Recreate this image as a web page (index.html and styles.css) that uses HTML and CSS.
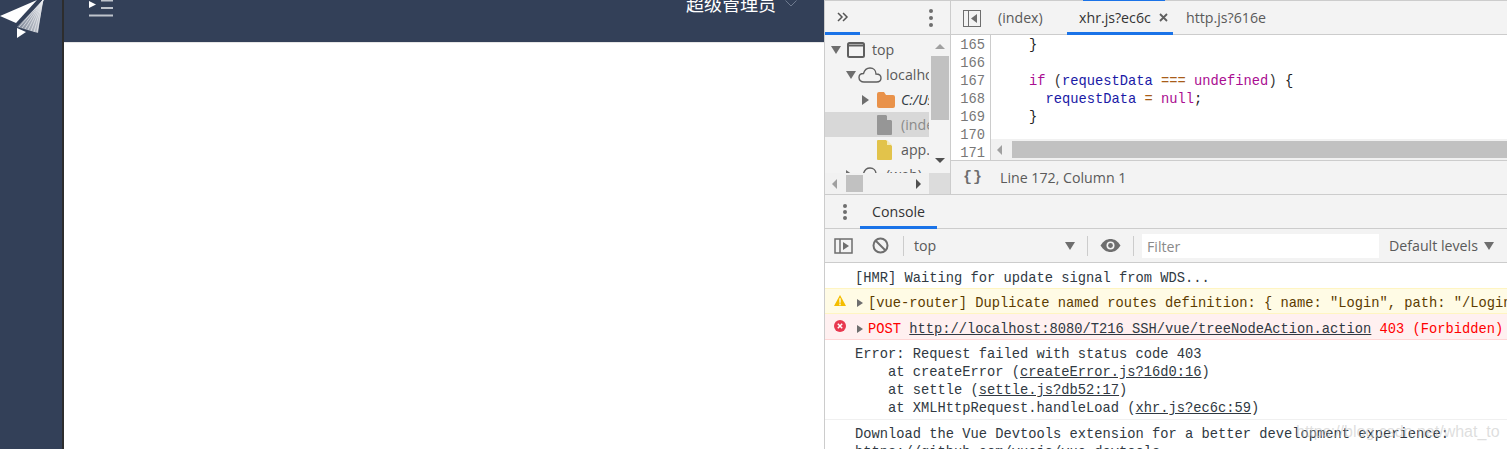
FILE: index.html
```html
<!DOCTYPE html>
<html lang="zh">
<head>
<meta charset="utf-8">
<title>DevTools</title>
<link rel="stylesheet" href="styles.css">
</head>
<body>
<div class="screen">
  <aside class="sidebar">
    <svg class="logo" width="48" height="42" viewBox="0 0 48 42">
      <defs>
        <linearGradient id="fold" x1="0" y1="0" x2="1" y2="0">
          <stop offset="0" stop-color="#7d8696"/>
          <stop offset="1" stop-color="#c9cdd4"/>
        </linearGradient>
      </defs>
      <polygon points="0,16 37,0 16,23" fill="#fff"/>
      <polygon points="17,27 43,0 38,33" fill="url(#fold)"/>
      <path d="M19 27 43 0M22 28 43 0M25 29 43 0M28 30 43 0M31 31 43 0M34 32 43 0M37 32 43 0" stroke="#eceef1" stroke-width=".7" fill="none"/>
      <polygon points="17,28 17,38 26,32" fill="#fff"/>
    </svg>
  </aside>
  <main class="page">
    <header class="topbar">
      <svg class="menu-icon" width="26" height="18" viewBox="0 0 26 18">
        <polygon points="1,1 8,4.5 1,8" fill="#fff"/>
        <path d="M13 .5H25M13 8H25M1 15.500H25" stroke="#bfc4cc" stroke-width="2"/>
      </svg>
      <div class="user">
        <span class="user-name">超级管理员</span>
        <svg width="12" height="7" viewBox="0 0 12 7"><path d="M.5.5 6 6 11.500.5" stroke="#6f7b8f" fill="none"/></svg>
      </div>
    </header>
  </main>
  <section class="devtools">
    <div class="sources">
      <div class="navigator">
        <div class="nav-tabs">
          <div class="nav-tab">
            <svg width="12" height="10" viewBox="0 0 12 10"><path d="M1 1 5 5 1 9M6 1 10 5 6 9" stroke="#555" stroke-width="1.500" fill="none"/></svg>
          </div>
          <span class="kebab"><i></i><i></i><i></i></span>
        </div>
        <div class="nav-body">
          <div class="tree-area">
            <div class="tree">
              <div class="tree-row lvl0"><i class="arrow-down"></i>
                <svg class="tree-ico" width="18" height="16" viewBox="0 0 18 16"><rect x="1" y="1" width="16" height="14" rx="1.500" fill="none" stroke="#5f5f5f" stroke-width="2"/><path d="M1 3.500H17" stroke="#5f5f5f" stroke-width="2"/></svg>
                <span>top</span></div>
              <div class="tree-row lvl1"><i class="arrow-down"></i>
                <svg class="tree-ico" width="24" height="16" viewBox="0 0 24 16"><path d="M6 15C3 15 1 13 1 10.500 1 8 3 6.500 5.500 6.500 6.500 3 9 1 12 1 15.500 1 18 3.500 18 7 21 7 23 8.500 23 11 23 13.500 21 15 18.500 15Z" fill="none" stroke="#5f5f5f" stroke-width="1.400"/></svg>
                <span>localhost:8080</span></div>
              <div class="tree-row lvl2"><i class="arrow-right"></i>
                <svg class="tree-ico" width="18" height="16" viewBox="0 0 18 16"><path d="M0 2Q0 0 2 0H7L9 3H16Q18 3 18 5V14Q18 16 16 16H2Q0 16 0 14Z" fill="#e9924a"/></svg>
                <span class="folder-name">C:/Users</span></div>
              <div class="tree-row lvl3 selected">
                <svg class="tree-ico" width="15" height="20" viewBox="0 0 15 20"><path d="M1 0H9L15 6V19Q15 20 14 20H1Q0 20 0 19V1Q0 0 1 0Z" fill="#969696"/><path d="M10 0 15 5H10Z" fill="#d8d8d8"/></svg>
                <span class="muted">(index)</span></div>
              <div class="tree-row lvl3">
                <svg class="tree-ico" width="15" height="20" viewBox="0 0 15 20"><path d="M1 0H9L15 6V19Q15 20 14 20H1Q0 20 0 19V1Q0 0 1 0Z" fill="#e2c34b"/><path d="M10 0 15 5H10Z" fill="#f5eab8"/></svg>
                <span>app.js</span></div>
              <div class="tree-row lvl1"><i class="arrow-right"></i>
                <svg class="tree-ico" width="24" height="16" viewBox="0 0 24 16"><path d="M6 15C3 15 1 13 1 10.500 1 8 3 6.500 5.500 6.500 6.500 3 9 1 12 1 15.500 1 18 3.500 18 7 21 7 23 8.500 23 11 23 13.500 21 15 18.500 15Z" fill="none" stroke="#5f5f5f" stroke-width="1.400"/></svg>
                <span>(web)</span></div>
            </div>
            <div class="vscroll">
              <i class="sb-up"></i>
              <div class="vthumb"></div>
              <i class="sb-down"></i>
            </div>
          </div>
          <div class="hscroll-row">
            <div class="nav-hscroll">
              <i class="sb-left"></i>
              <div class="nav-hthumb"></div>
              <i class="sb-right"></i>
            </div>
            <div class="sb-corner"></div>
          </div>
        </div>
      </div>
      <div class="editor">
        <div class="editor-tabs">
          <svg class="panel-toggle" width="18" height="17" viewBox="0 0 18 17"><rect x=".5" y=".5" width="17" height="16" fill="none" stroke="#6e6e6e"/><path d="M5.500 1V16" stroke="#6e6e6e"/><polygon points="14,4 8,8.500 14,13" fill="#6e6e6e"/></svg>
          <div class="file-tab index-tab">(index)</div>
          <div class="file-tab active">xhr.js?ec6c<svg class="tab-close" width="9" height="9" viewBox="0 0 9 9"><path d="M1 1 8 8M8 1 1 8" stroke="#5f5f5f" stroke-width="1.800"/></svg></div>
          <div class="file-tab http-tab">http.js?616e</div>
        </div>
        <div class="code-area">
          <div class="gutter">
            <div>165</div><div>166</div><div>167</div><div>168</div><div>169</div><div>170</div><div>171</div>
          </div>
          <div class="code-col">
            <div class="code">
<div class="code-line">    <span class="br">}</span></div>
<div class="code-line"> </div>
<div class="code-line">    <span class="kw">if</span> (<span class="var">requestData</span> <span class="op">===</span> <span class="kw">undefined</span>) <span class="br">{</span></div>
<div class="code-line">      <span class="var">requestData</span> <span class="op">=</span> <span class="kw">null</span><span class="br">;</span></div>
<div class="code-line">    <span class="br">}</span></div>
            </div>
            <div class="code-hscroll">
              <i class="sb-left"></i>
              <div class="code-hthumb"></div>
            </div>
          </div>
        </div>
        <div class="status">
          <span class="braces">{}</span>
          <span>Line 172, Column 1</span>
        </div>
      </div>
    </div>
    <div class="console-tabs">
      <span class="kebab"><i></i><i></i><i></i></span>
      <div class="console-tab">Console</div>
    </div>
    <div class="console-toolbar">
      <svg class="tb-sidebar" width="19" height="16" viewBox="0 0 19 16"><rect x="1" y="1" width="17" height="14" fill="none" stroke="#6e6e6e" stroke-width="1.500"/><path d="M6 1V15" stroke="#6e6e6e" stroke-width="1.500"/><polygon points="9,4 15,8 9,12" fill="#6e6e6e"/></svg>
      <svg class="tb-clear" width="17" height="17" viewBox="0 0 17 17"><circle cx="8.500" cy="8.500" r="7" fill="none" stroke="#6e6e6e" stroke-width="2"/><path d="M3.500 3.500 13.500 13.500" stroke="#6e6e6e" stroke-width="2"/></svg>
      <i class="tb-sep"></i>
      <div class="context"><span>top</span><i class="select-arrow"></i></div>
      <i class="tb-sep"></i>
      <svg class="tb-eye" width="21" height="13" viewBox="0 0 20 13"><path d="M0 6.500C3 2 6 0 10 0S17 2 20 6.500C17 11 14 13 10 13S3 11 0 6.500Z" fill="#6e6e6e"/><circle cx="10" cy="6.500" r="4" fill="#f3f3f3"/><circle cx="10" cy="6.500" r="2.400" fill="#6e6e6e"/></svg>
      <i class="tb-sep"></i>
      <div class="filter">Filter</div>
      <div class="levels"><span>Default levels</span><i class="select-arrow"></i></div>
    </div>
    <div class="messages">
      <div class="msg plain"><span class="msg-text">[HMR] Waiting for update signal from WDS...</span></div>
      <div class="msg warn">
        <svg class="msg-ico" width="12" height="13" viewBox="0 0 14 13"><polygon points="7,0 14,13 0,13" fill="#f4bd00"/><path d="M7 4V9M7 10V12" stroke="#fff" stroke-width="1.500"/></svg>
        <i class="msg-arrow"></i><span class="msg-text">[vue-router] Duplicate named routes definition: { name: "Login", path: "/Login", component: Login }</span>
      </div>
      <div class="msg error">
        <svg class="msg-ico" width="12" height="12" viewBox="0 0 12 12"><circle cx="6" cy="6" r="6" fill="#e8384f"/><path d="M3.800 3.800 8.200 8.200M8.200 3.800 3.800 8.200" stroke="#fff" stroke-width="1.500"/></svg>
        <i class="msg-arrow"></i><span class="msg-text">POST <a class="link">http://localhost:8080/T216_SSH/vue/treeNodeAction.action</a> 403 (Forbidden)</span>
      </div>
      <div class="msg block">
        <div>Error: Request failed with status code 403</div>
        <div class="trace">at createError (<a class="link">createError.js?16d0:16</a>)</div>
        <div class="trace">at settle (<a class="link">settle.js?db52:17</a>)</div>
        <div class="trace">at XMLHttpRequest.handleLoad (<a class="link">xhr.js?ec6c:59</a>)</div>
      </div>
      <div class="msg block last">
        <div>Download the Vue Devtools extension for a better development experience:</div>
        <div>https://github.com/vuejs/vue-devtools</div>
      </div>
    </div>
    <div class="watermark">https://blog.csdn.net/what_to</div>
  </section>
</div>
</body>
</html>
```

FILE: styles.css
```css
* { box-sizing: border-box; }
html, body { margin: 0; height: 100%; overflow: hidden; background: #fff; }
i { display: block; font-style: normal; }

.screen {
  display: flex;
  width: 1507px;
  height: 449px;
  overflow: hidden;
  font-family: "Open Sans", "Noto Sans", "Noto Sans CJK SC", sans-serif;
  font-size: 14.200px;
  color: #5a5a5a;
}

/* App behind DevTools */
.sidebar {
  flex: 0 0 64px;
  background: #334058;
  border-right: 2px solid #2d2d2d;
  overflow: hidden;
}
.logo { display: block; }
.page { flex: 0 0 760px; background: #fff; }
.topbar {
  height: 43px;
  background: #334058;
  border-bottom: 1px solid #e6e6e6;
  display: flex;
  justify-content: space-between;
  align-items: flex-start;
  padding: 0 27px 0 24px;
}
.menu-icon { display: block; }
.user { display: flex; gap: 9px; margin-top: -10px; }
.user svg { margin-top: 10px; }
.user-name {
  color: #fff;
  font-size: 18px;
  line-height: 26px;
  font-family: "Noto Sans CJK SC", sans-serif;
}

/* DevTools */
.devtools {
  position: relative;
  flex: 1;
  display: flex;
  flex-direction: column;
  min-width: 0;
  background: #fff;
  border-left: 1px solid #ccc;
}
.sources {
  flex: 0 0 195px;
  height: 195px;
  min-height: 0;
  overflow: hidden;
  display: flex;
  border-bottom: 1px solid #ccc;
  background: #f3f3f3;
}

.navigator {
  flex: 0 0 126px;
  display: flex;
  flex-direction: column;
  min-height: 0;
  overflow: hidden;
  border-right: 1px solid #ccc;
  border-top: 1px solid #ccc;
}
.nav-tabs {
  flex: 0 0 34px;
  min-height: 0;
  display: flex;
  justify-content: space-between;
  align-items: center;
  border-bottom: 1px solid #ccc;
}
.nav-tab {
  align-self: flex-start;
  width: 35px;
  height: 34px;
  display: flex;
  align-items: center;
  justify-content: center;
  border-bottom: 3px solid #1a73e8;
}
.kebab { display: flex; flex-direction: column; gap: 3px; margin-right: 17px; }
.kebab i { width: 4px; height: 4px; border-radius: 50%; background: #6e6e6e; }
.nav-body { flex: 1; display: flex; flex-direction: column; min-height: 0; }
.tree-area { flex: 1; display: flex; min-height: 0; overflow: hidden; }
.tree { flex: 0 0 104px; padding-top: 2px; overflow: hidden; }
.tree-row {
  display: flex;
  align-items: center;
  height: 25px;
  white-space: nowrap;
  overflow: hidden;
}
.tree-ico { flex: none; }
.lvl0 { padding-left: 6px; }
.lvl0 .tree-ico { margin-left: 6px; }
.lvl0 span { margin-left: 7px; }
.lvl1 { padding-left: 21px; }
.lvl1 .tree-ico { margin-left: 2px; }
.lvl1 .arrow-right + .tree-ico { margin-left: 5px; }
.lvl1 span { margin-left: 4px; }
.lvl2 { padding-left: 37px; }
.lvl2 .tree-ico { margin-left: 8px; }
.lvl2 span { margin-left: 6px; }
.lvl3 { padding-left: 52px; }
.lvl3 span { margin-left: 9px; }
.selected { background: #d8d8d8; }
.muted { color: #8a8a8a; }
.folder-name { color: #303942; font-style: italic; }
.arrow-down { flex: none; width: 0; height: 0; border: 5px solid transparent; border-top: 8px solid #6e6e6e; border-bottom: 0; }
.arrow-right { flex: none; width: 0; height: 0; border: 5px solid transparent; border-left: 7px solid #6e6e6e; border-right: 0; }

.vscroll {
  flex: 0 0 18px;
  margin-left: 2px;
  display: flex;
  flex-direction: column;
  align-items: stretch;
  padding-top: 9px;
}
.sb-up { align-self: center; width: 0; height: 0; border: 5px solid transparent; border-bottom: 5px solid #a0a0a0; border-top: 0; }
.vthumb { height: 64px; margin-top: 7px; background: #c1c1c1; }
.sb-down { align-self: center; margin-top: 38px; width: 0; height: 0; border: 5px solid transparent; border-top: 5px solid #505050; border-bottom: 0; }

.hscroll-row { flex: 0 0 21px; display: flex; }
.nav-hscroll {
  flex: 1;
  display: flex;
  align-items: center;
  padding-left: 7px;
  background: #f1f1f1;
}
.sb-left { flex: none; width: 0; height: 0; border: 5px solid transparent; border-right: 5px solid #a0a0a0; border-left: 0; }
.sb-right { flex: none; width: 0; height: 0; border: 5px solid transparent; border-left: 5px solid #505050; border-right: 0; margin-left: 53px; }
.nav-hthumb { width: 17px; height: 17px; margin-left: 9px; background: #c1c1c1; }
.sb-corner { flex: 0 0 21px; background: #dcdcdc; }

.editor { flex: 1; display: flex; flex-direction: column; min-width: 0; min-height: 0; border-top: 1px solid #ccc; }
.editor-tabs {
  flex: 0 0 34px;
  min-height: 0;
  display: flex;
  align-items: flex-start;
  border-bottom: 1px solid #ccc;
  white-space: nowrap;
}
.panel-toggle { flex: none; margin: 9px 0 0 12px; }
.file-tab {
  flex: none;
  padding: 7px 12px 0;
  height: 33px;
  color: #5a5a5a;
}
.index-tab { margin-left: 5px; width: 81px; }
.file-tab.active {
  position: relative;
  width: 106px;
  height: 34px;
  border-bottom: 3px solid #1a73e8;
  color: #333;
  padding-right: 0;
  display: flex;
  align-items: flex-start;
  gap: 8px;
}
.file-tab.active::before {
  content: "";
  position: absolute;
  left: 16px;
  top: -1px;
  width: 82px;
  height: 1px;
  background: #1a73e8;
}
.http-tab { padding-left: 13px; }
.tab-close { flex: none; margin-top: 5px; }
.code-area { flex: 1; display: flex; min-height: 0; background: #fff; }
.gutter {
  flex: 0 0 40px;
  border-right: 1px solid #ccc;
  text-align: right;
  padding: 2px 5px 0 0;
  font: 13.750px/18px "Liberation Mono", monospace;
  color: #777;
  overflow: hidden;
  background: #fff;
}
.code-col { flex: 1; display: flex; flex-direction: column; min-width: 0; }
.code {
  flex: 1;
  min-height: 0;
  overflow: hidden;
  font: 13.750px/18px "Liberation Mono", monospace;
  color: #333;
  padding: 2px 0 0 5px;
}
.code-line { white-space: pre; height: 18px; }
.kw { color: #aa0d91; }
.var { color: #1a1aa6; }
.op { color: #a85c1a; }
.br { color: #222; }
.code-hscroll { flex: 0 0 21px; display: flex; align-items: center; padding-left: 6px; background: #f1f1f1; }
.code-hthumb { flex: 1; height: 17px; margin-left: 10px; background: #c1c1c1; }
.status {
  flex: 0 0 34px;
  display: flex;
  align-items: center;
  padding-left: 12px;
  border-top: 1px solid #ccc;
  color: #5a5a5a;
}
.braces { width: 18px; margin-right: 19px; font: bold 15px "Liberation Mono", monospace; color: #6e6e6e; letter-spacing: 1px; white-space: nowrap; }

.console-tabs {
  flex: 0 0 34px;
  min-height: 0;
  display: flex;
  align-items: center;
  background: #f3f3f3;
  border-bottom: 1px solid #ccc;
}
.console-tabs .kebab { margin: 0 0 0 18px; gap: 2px; }
.console-tab {
  align-self: flex-start;
  margin-left: 13px;
  width: 77px;
  height: 34px;
  padding-top: 7px;
  text-align: center;
  border-bottom: 3px solid #1a73e8;
  color: #333;
}
.console-toolbar {
  flex: 0 0 34px;
  display: flex;
  align-items: center;
  background: #f3f3f3;
  border-bottom: 1px solid #ccc;
  padding-left: 9px;
}
.tb-sep { flex: none; width: 1px; height: 20px; background: #ccc; }
.tb-clear { margin-left: 19px; }
.tb-clear + .tb-sep { margin-left: 14px; }
.context { flex: none; width: 183px; display: flex; justify-content: space-between; align-items: center; padding: 0 12px 0 10px; }
.select-arrow { flex: none; width: 0; height: 0; border: 5px solid transparent; border-top: 8px solid #6e6e6e; border-bottom: 0; }
.tb-eye { margin-left: 12px; }
.tb-eye + .tb-sep { margin-left: 12px; }
.filter {
  flex: none;
  margin-left: 8px;
  width: 237px;
  height: 24px;
  padding: 3px 5px;
  background: #fff;
  color: #8a8a8a;
}
.levels { display: flex; align-items: center; gap: 6px; margin-left: 10px; white-space: nowrap; }

.messages {
  flex: 1;
  min-height: 0;
  overflow: hidden;
  font: 13.750px/18px "Liberation Mono", monospace;
  color: #303942;
  white-space: nowrap;
}
.msg {
  display: flex;
  align-items: center;
  height: 26px;
  padding-left: 30px;
  overflow: hidden;
}
.msg-text { padding-top: 6px; }
.plain { height: 25px; padding-top: 0; }
.warn {
  padding-left: 9px;
  background: #fffbe5;
  color: #5c3b00;
  border-top: 1px solid #fff5c2;
  border-bottom: 1px solid #fff5c2;
}
.error {
  padding-left: 9px;
  background: #fff0f0;
  color: #f00;
  border-bottom: 1px solid #ffd6d6;
}
.msg-ico { flex: none; margin: -2px 0 0; }
.msg-arrow { flex: none; width: 0; height: 0; border: 4px solid transparent; border-left: 6px solid #6e6e6e; border-right: 0; margin: 4px 5px 0 11px; }
.link { color: #303942; text-decoration: underline; }
.block {
  display: block;
  height: auto;
  padding: 6px 0 1px 30px;
}
.trace { padding-left: 33px; }
.last { border-top: 1px solid #f0f0f0; padding-top: 6px; }
.watermark {
  position: absolute;
  left: 471px;
  top: 422px;
  font: 16px/20px "Liberation Sans", sans-serif;
  color: rgba(200, 200, 200, .6);
  white-space: nowrap;
}
```
